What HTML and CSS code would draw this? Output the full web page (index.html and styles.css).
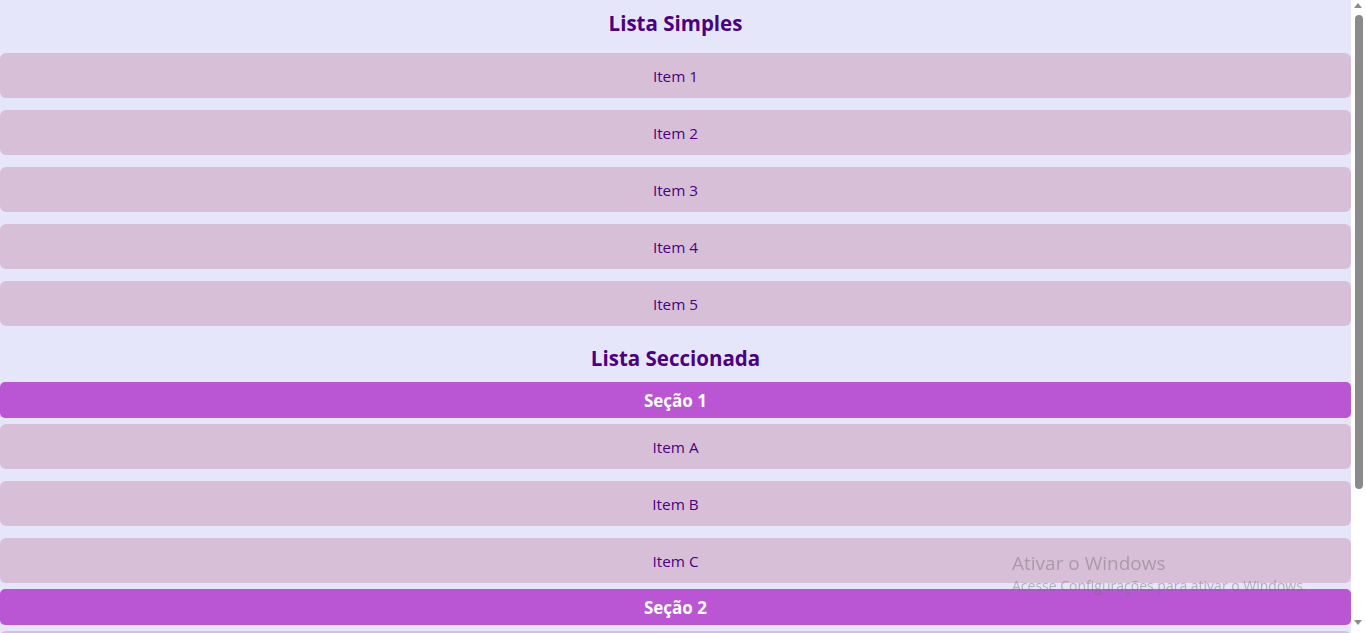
FILE: index.html
```html
<!DOCTYPE html>
<html lang="pt-BR">
<head>
<meta charset="utf-8">
<title>Listas</title>
<link rel="stylesheet" href="styles.css">
</head>
<body>
<div class="page">
  <main class="screen">
    <h1 class="title title-first">Lista Simples</h1>
    <div class="item">Item 1</div>
    <div class="item">Item 2</div>
    <div class="item">Item 3</div>
    <div class="item">Item 4</div>
    <div class="item">Item 5</div>

    <h1 class="title title-second">Lista Seccionada</h1>
    <div class="section-header">Seção 1</div>
    <div class="item">Item A</div>
    <div class="item">Item B</div>
    <div class="item">Item C</div>
    <div class="section-header">Seção 2</div>
    <div class="item">Item D</div>
    <div class="item">Item E</div>
    <div class="item">Item F</div>
  </main>
  <aside class="scrollbar">
    <span class="arrow arrow-up"></span>
    <span class="thumb"></span>
    <span class="arrow arrow-down"></span>
  </aside>
</div>
<div class="watermark">
  <div class="wm-title">Ativar o Windows</div>
  <div class="wm-sub">Acesse Configurações para ativar o Windows.</div>
</div>
</body>
</html>
```

FILE: styles.css
```css
html, body {
  margin: 0;
  padding: 0;
  background: #e6e6fa;
  height: 633px;
  overflow: hidden;
}

body {
  font-family: "Open Sans", "Noto Sans", sans-serif;
  color: #4b0082;
}

.page {
  display: flex;
  height: 633px;
  overflow: hidden;
}

.screen {
  flex: 1;
  display: flex;
  flex-direction: column;
  min-width: 0;
}

.title {
  margin: 10px 0;
  font-size: 20.5px;
  line-height: 27px;
  font-weight: 700;
  text-align: center;
  color: #4b0082;
}

.title-second {
  margin-top: 13px;
}

.item {
  flex: none;
  margin: 6px 0;
  padding: 13px 0 11px;
  line-height: 21px;
  font-size: 15.3px;
  text-align: center;
  background: #d8bfd8;
  border-radius: 6px;
  color: #4b0082;
}

.section-header {
  flex: none;
  padding: 9px 0 7px;
  line-height: 20px;
  font-size: 17px;
  font-weight: 700;
  text-align: center;
  color: #ffffff;
  background: #ba55d3;
  border-radius: 5px;
}

.scrollbar {
  flex: none;
  width: 14px;
  height: 633px;
  background: #ffffff;
  display: flex;
  flex-direction: column;
  align-items: center;
}

.arrow {
  width: 0;
  height: 0;
  border-left: 4px solid transparent;
  border-right: 4px solid transparent;
}

.arrow-up {
  margin-top: 3px;
  border-bottom: 5px solid #8c8c8c;
}

.arrow-down {
  margin-top: auto;
  margin-bottom: 8px;
  border-top: 5px solid #8c8c8c;
}

.thumb {
  margin-top: 7px;
  width: 8px;
  height: 474px;
  border-radius: 4px;
  background: #8a8a8a;
  margin-left: 1px;
}

.watermark {
  position: fixed;
  left: 1012px;
  top: 551px;
  color: rgba(110, 110, 110, 0.45);
  font-family: "Open Sans", sans-serif;
  pointer-events: none;
}

.wm-title {
  font-size: 19px;
  line-height: 25px;
}

.wm-sub {
  font-size: 14px;
  line-height: 20px;
}
```
